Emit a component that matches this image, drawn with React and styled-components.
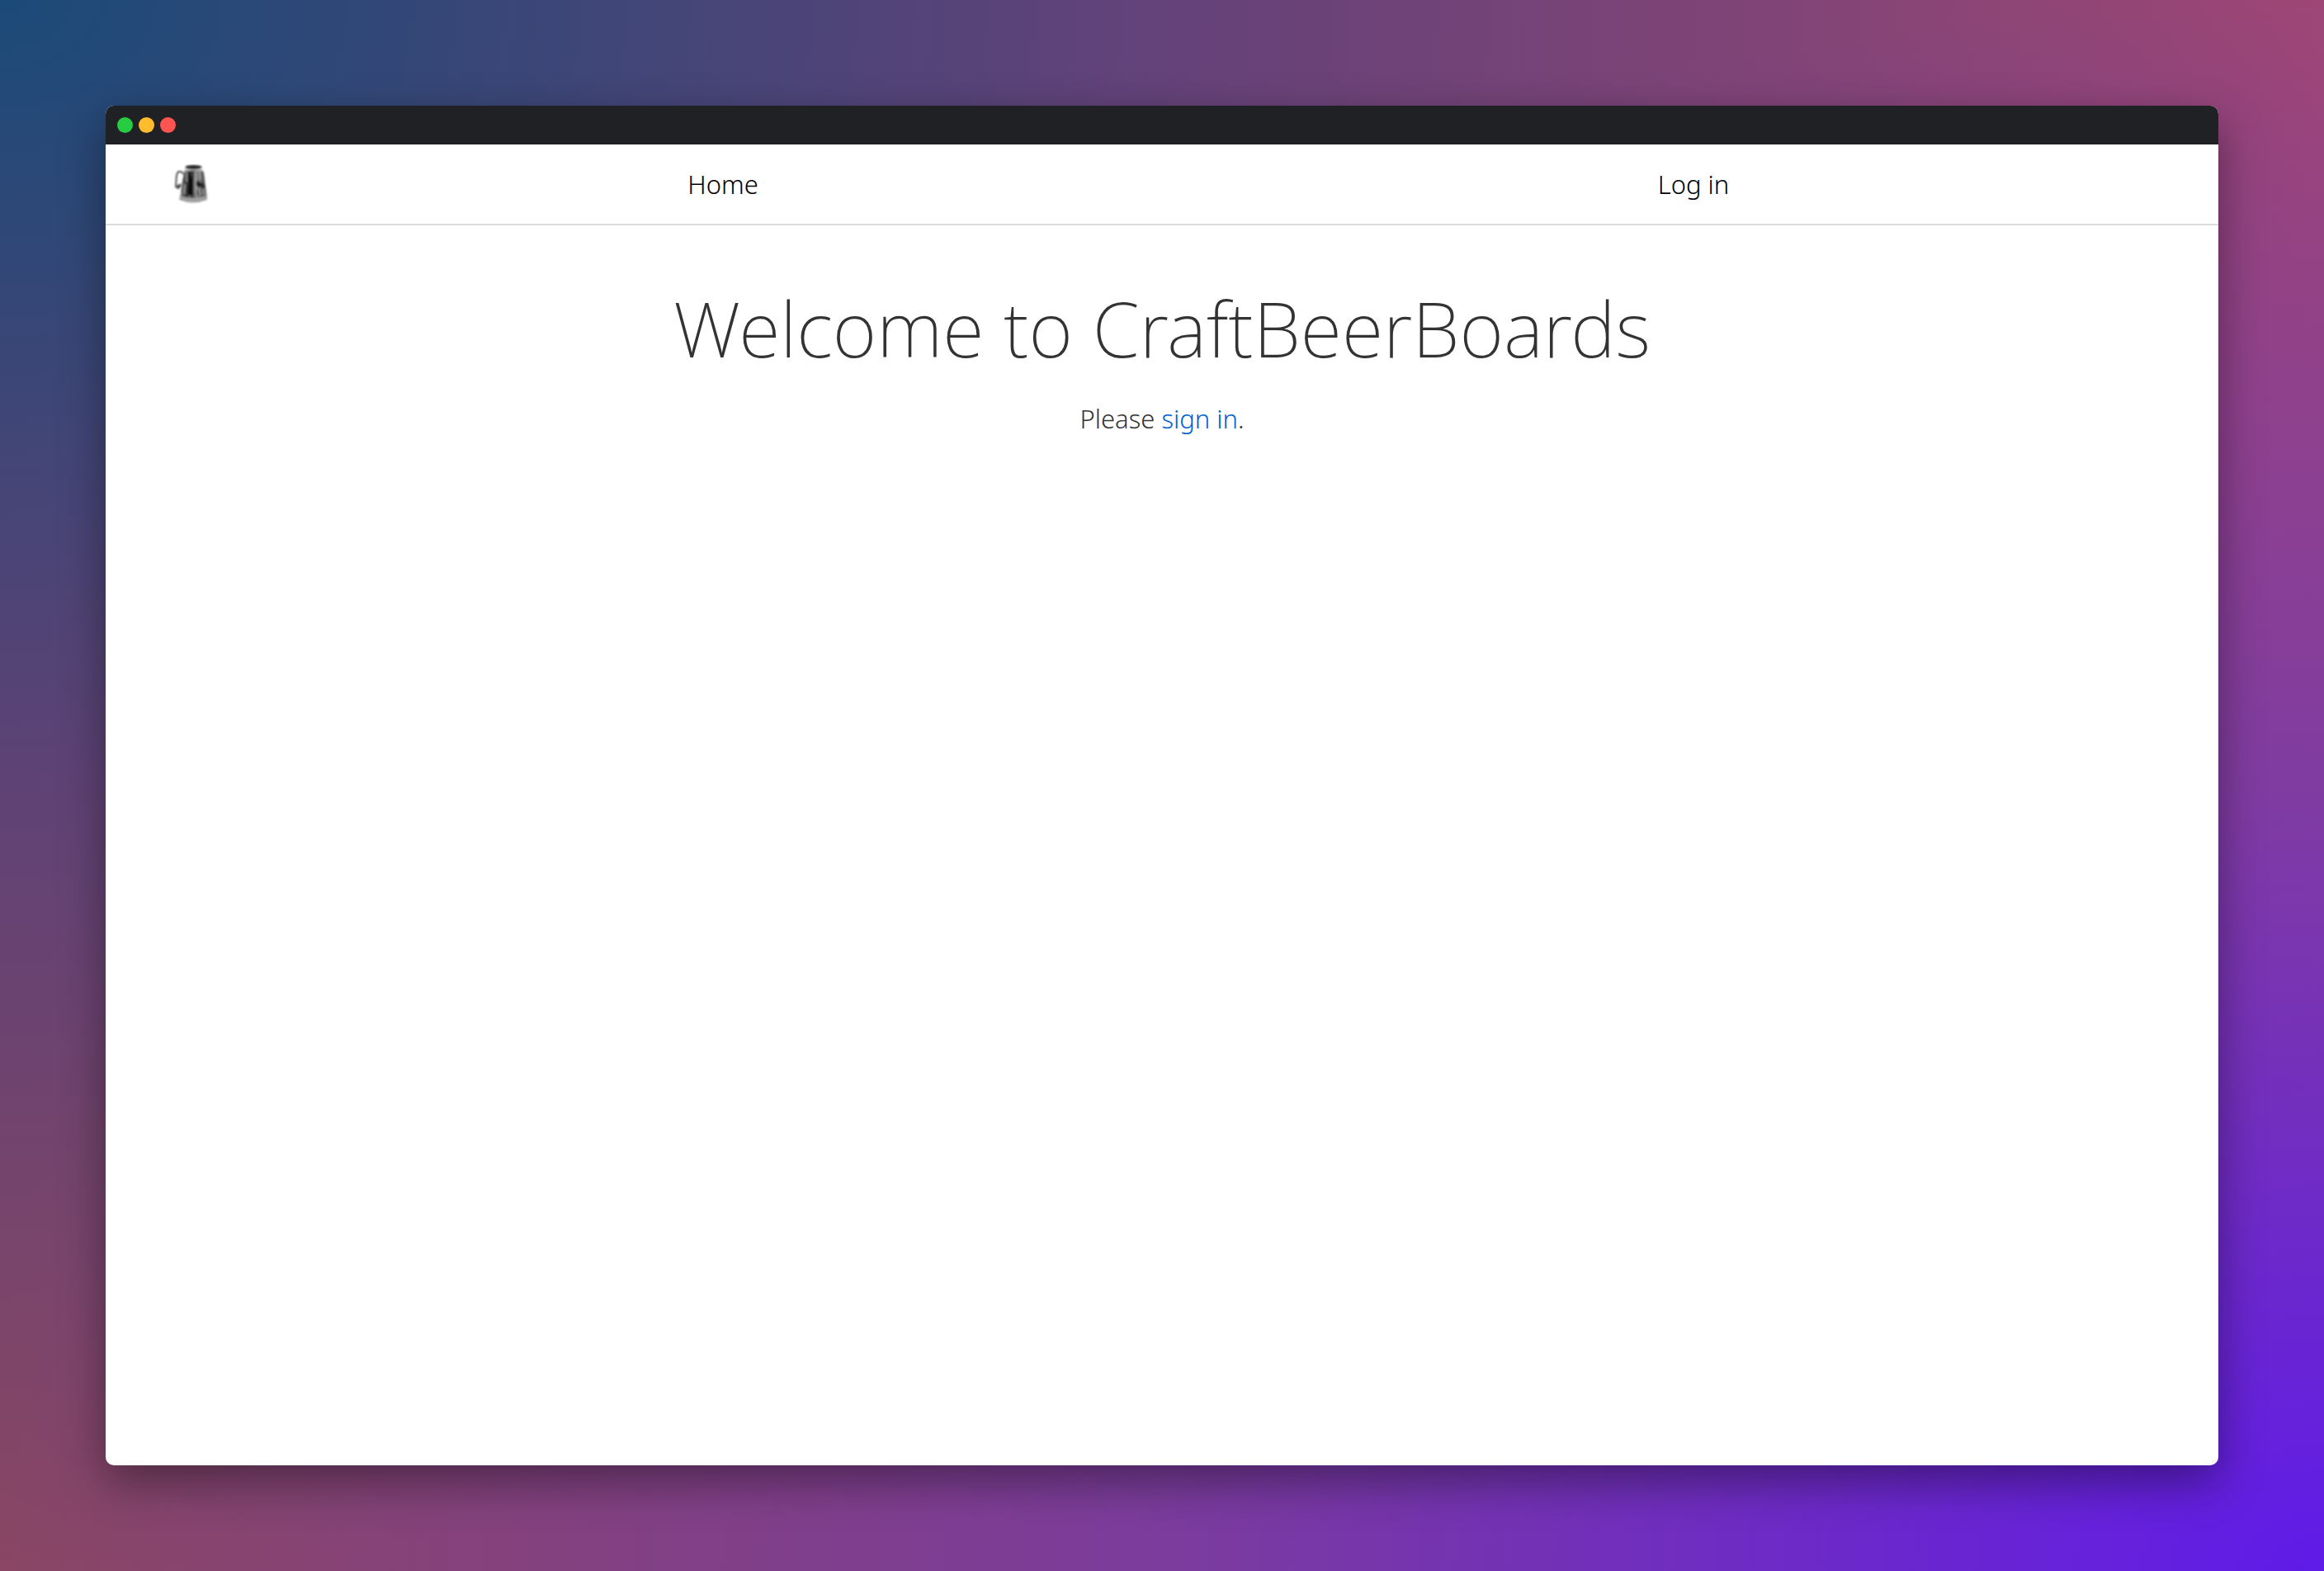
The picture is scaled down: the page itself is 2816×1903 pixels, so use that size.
import React from "react";
import styled, { createGlobalStyle } from "styled-components";

const GlobalStyle = createGlobalStyle`
  * { box-sizing: border-box; }
  body { margin: 0; font-family: "Noto Sans", sans-serif; }
`;

const Desktop = styled.div`
  min-height: 100vh;
  padding: 128px;
  display: flex;
  background:
    radial-gradient(ellipse farthest-side at 0 0, #1b4a78 0%, rgba(52, 62, 134, 0.5) 50%, rgba(70, 60, 140, 0) 100%),
    radial-gradient(ellipse farthest-side at 100% 100%, #5f1be8 0%, rgba(88, 46, 222, 0.42) 50%, rgba(95, 60, 200, 0) 100%),
    linear-gradient(90deg, #8a4664, #9e4676);
`;

const BrowserWindow = styled.div`
  flex: 1;
  display: flex;
  flex-direction: column;
  border-radius: 10px;
  overflow: hidden;
  background: #fff;
  box-shadow: 0 20px 54px rgba(0, 0, 0, 0.4);
`;

const TitleBar = styled.div`
  height: 47px;
  padding: 0 14px;
  display: flex;
  align-items: center;
  gap: 7px;
  background: #202124;
`;

const Dot = styled.span`
  width: 19px;
  height: 19px;
  border-radius: 50%;
  background: ${(p) => p.$color};
`;

const Header = styled.header`
  height: 98px;
  padding: 0 48px;
  display: flex;
  align-items: center;
  border-bottom: 2px solid #dcdcdc;
`;

const Brand = styled.a`
  display: flex;
  padding: 0 32px;
`;

const MugDrawing = styled.svg`
  width: 48px;
  height: 48px;
`;

const Nav = styled.nav`
  flex: 1;
  display: grid;
  grid-template-columns: 1fr 1fr;
  justify-items: center;
`;

const NavLink = styled.a`
  color: #000;
  font-size: 31px;
  font-weight: 300;
  line-height: 48px;
  text-decoration: none;
`;

const Main = styled.main`
  padding: 64px 32px;
  text-align: center;
  color: #333;
`;

const Title = styled.h1`
  margin: 0;
  font-size: 92px;
  font-weight: 200;
  line-height: 122px;
`;

const Prompt = styled.p`
  margin: 24px 0 0;
  font-size: 31px;
  font-weight: 300;
  line-height: 48px;
`;

const SignIn = styled.a`
  color: #0062d1;
  text-decoration: none;
`;

const Mug = () => (
  <MugDrawing viewBox="0 0 48 48" aria-hidden="true">
    <defs>
      <linearGradient id="mugSide" x1="0" x2="1" y1="0" y2="0">
        <stop offset="0" stopColor="#777" />
        <stop offset="0.15" stopColor="#4a4a4a" />
        <stop offset="0.4" stopColor="#2a2a2a" />
        <stop offset="0.6" stopColor="#8a8a8a" />
        <stop offset="0.85" stopColor="#555" />
        <stop offset="1" stopColor="#888" />
      </linearGradient>
      <filter id="mugSoft" x="-10%" y="-10%" width="120%" height="120%">
        <feGaussianBlur stdDeviation="0.9" />
      </filter>
    </defs>
    <g filter="url(#mugSoft)">
      <path d="M14 12 L12 9 L8 9 L6 13 L5 27 L8 29 L11 25" fill="none" stroke="#555" strokeWidth="2" />
      <path d="M6 26 L11 23 L11 27 L7 30Z" fill="#444" />
      <path d="M16 6 L37 6 L39 10 L43 40 Q27 47 10 41 L13 20Z" fill="url(#mugSide)" />
      <path d="M10 38 Q26 44 43 38 L43 43 Q26 50 9 43Z" fill="#a0a0a0" />
      <path d="M16 6 L37 6 L38 9 Q27 6 15 9Z" fill="#b5b5b5" />
      <ellipse cx="26.5" cy="3.5" rx="10" ry="2.5" fill="#161616" stroke="#777" strokeWidth="1" />
      <path d="M18 9 V21 M16 24 L15 36 M29 10 V34 M34 9 L35 19" stroke="#a8a8a8" strokeWidth="1.4" fill="none" />
      <path d="M21 8 L19 36 L26 38 L26 9 L24 18Z" fill="#0e0e0e" />
      <path d="M31 20 L36 24 L34 28 L30 25Z M37 22 L40 27 L37 29Z M31 31 L32 37" fill="#161616" stroke="#161616" />
      <path d="M33 29 L35 38 M38 30 L39 37 M12 34 L11 38 M22 38 V41" stroke="#a0a0a0" strokeWidth="1.2" />
    </g>
  </MugDrawing>
);

export default function App() {
  return (
    <>
      <GlobalStyle />
      <Desktop>
        <BrowserWindow>
          <TitleBar>
            <Dot $color="#27cd41" />
            <Dot $color="#ffbd2e" />
            <Dot $color="#ff544f" />
          </TitleBar>
          <Header>
            <Brand href="#" aria-label="CraftBeerBoards">
              <Mug />
            </Brand>
            <Nav>
              <NavLink href="#">Home</NavLink>
              <NavLink href="#login">Log in</NavLink>
            </Nav>
          </Header>
          <Main>
            <Title>Welcome to CraftBeerBoards</Title>
            <Prompt>
              Please <SignIn href="#login">sign in</SignIn>.
            </Prompt>
          </Main>
        </BrowserWindow>
      </Desktop>
    </>
  );
}
